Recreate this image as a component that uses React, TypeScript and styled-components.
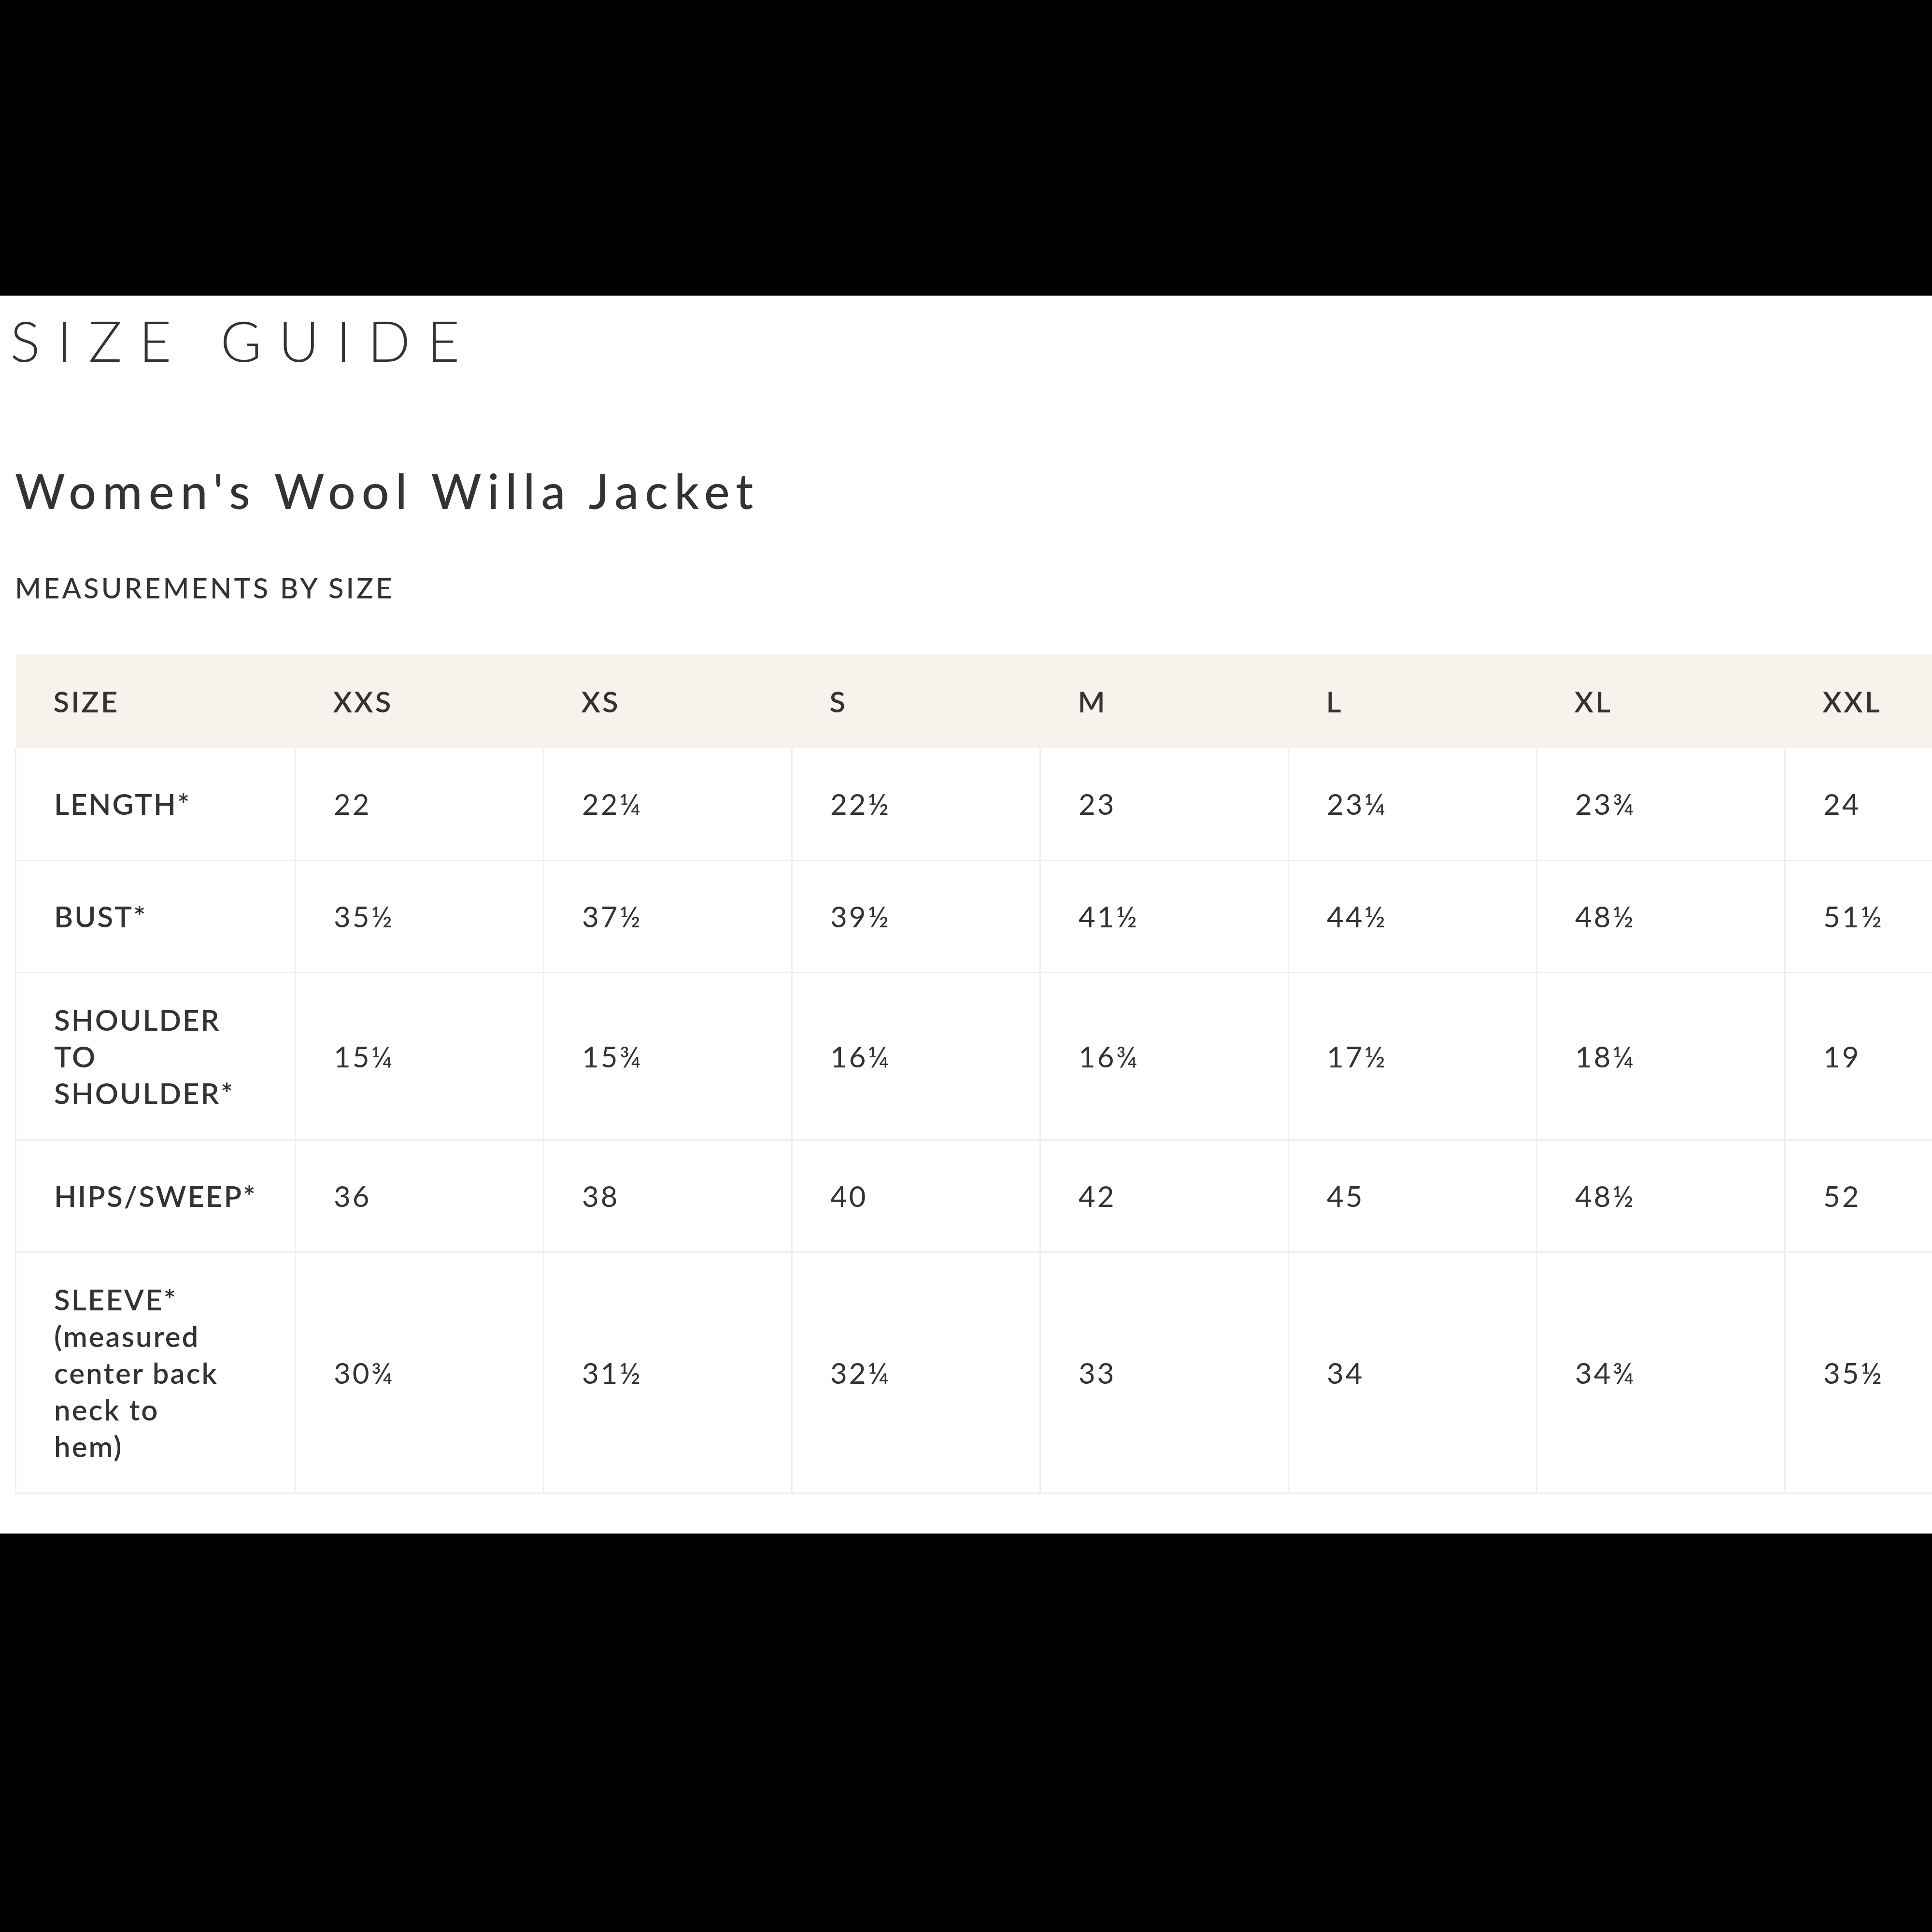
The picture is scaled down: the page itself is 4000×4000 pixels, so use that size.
import styled, { createGlobalStyle } from 'styled-components';

const GlobalStyle = createGlobalStyle`
    body{
        margin: 0;
        background: #000;
        overflow: hidden;
        font-family: "Lato", "Open Sans", sans-serif;
        color: #2f2f2f;
    }
`;

const TopBand = styled.div`
    height: 612px;
    background: #000;
`;

const Sheet = styled.section`
    background: #fff;
    width: 4000px;
    overflow: hidden;
    padding: 36px 0px 82px 31px;
    box-sizing: border-box;
`;

const Brand = styled.div`
    font-size: 116px;
    line-height: 1;
    font-weight: 300;
    letter-spacing: 35px;
    text-transform: uppercase;
    margin-left: -10px;
    margin-top: -1px;
    color: #333;
`;

const Title = styled.h1`
    margin: 202px 0px 0px 0px;
    font-size: 100px;
    line-height: 1;
    font-weight: 500;
    letter-spacing: 13px;
    color: #333;
`;

const Subtitle = styled.h2`
    margin: 123px 0px 109px 0px;
    font-size: 58px;
    line-height: 1;
    font-weight: 500;
    letter-spacing: 5px;
    text-transform: uppercase;
    color: #333;
`;

const Table = styled.table`
    border-collapse: collapse;
    table-layout: fixed;
    width: 4177px;
`;

const HeadRow = styled.tr`
    height: 194px;
    background: #f6f2ec;
`;

const Row = styled.tr`
    height: 232px;
`;

const HeadCell = styled.th`
    text-align: left;
    font-size: 60px;
    line-height: 76px;
    font-weight: 600;
    letter-spacing: 4px;
    padding: 0px 78px;
    color: #333;
`;

const Cell = styled.td<{ $label?: boolean }>`
    border: 3px solid #efefef;
    border-top: none;
    padding: 58px 78px;
    font-size: 60px;
    line-height: 76px;
    font-weight: ${p => p.$label ? 600 : 400};
    letter-spacing: ${p => p.$label ? '3px' : '4px'};
    white-space: nowrap;
    vertical-align: middle;
    color: #333;
`;

const sizes = ['XXS', 'XS', 'S', 'M', 'L', 'XL', 'XXL'];

const rows = [
    { label: ['LENGTH*'], values: ['22', '22¼', '22½', '23', '23¼', '23¾', '24'] },
    { label: ['BUST*'], values: ['35½', '37½', '39½', '41½', '44½', '48½', '51½'] },
    { label: ['SHOULDER', 'TO', 'SHOULDER*'], values: ['15¼', '15¾', '16¼', '16¾', '17½', '18¼', '19'] },
    { label: ['HIPS/SWEEP*'], values: ['36', '38', '40', '42', '45', '48½', '52'] },
    { label: ['SLEEVE*', '(measured', 'center back', 'neck to', 'hem)'], values: ['30¾', '31½', '32¼', '33', '34', '34¾', '35½'] },
];

export default function App() {
    return (
        <>
            <GlobalStyle />
            <TopBand />
            <Sheet>
                <Brand>Size Guide</Brand>
                <Title>Women's Wool Willa Jacket</Title>
                <Subtitle>Measurements by size</Subtitle>
                <Table>
                    <colgroup>
                        <col style={{ width: 579 }} />
                        {sizes.map(s => <col key={s} style={{ width: 514 }} />)}
                    </colgroup>
                    <thead>
                        <HeadRow>
                            <HeadCell>SIZE</HeadCell>
                            {sizes.map(s => <HeadCell key={s}>{s}</HeadCell>)}
                        </HeadRow>
                    </thead>
                    <tbody>
                        {rows.map(r => (
                            <Row key={r.label[0]}>
                                <Cell $label>
                                    {r.label.map((l, i) => (
                                        <span key={l}>{i > 0 && <br />}{l}</span>
                                    ))}
                                </Cell>
                                {r.values.map((v, i) => <Cell key={i}>{v}</Cell>)}
                            </Row>
                        ))}
                    </tbody>
                </Table>
            </Sheet>
        </>
    );
}
